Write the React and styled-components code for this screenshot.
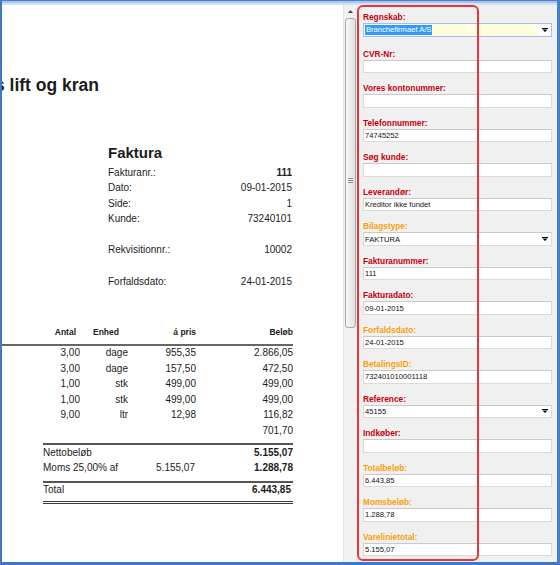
import React from 'react';
import styled, { createGlobalStyle } from 'styled-components';

const GlobalStyle = createGlobalStyle`
  html, body {
    margin: 0;
    padding: 0;
    background: #fff;
  }
  * {
    box-sizing: border-box;
  }
`;

const Window = styled.div`
  width: 560px;
  height: 565px;
  display: flex;
  flex-direction: column;
  border-left: 2px solid #3f78c5;
  border-right: 3px solid #4a7fc9;
  border-bottom: 3px solid #3f78c5;
  overflow: hidden;
`;

const TopStrip = styled.div`
  flex: none;
  height: 5px;
  background: linear-gradient(
    to bottom,
    #4f80c6 0,
    #4f80c6 1px,
    #a9c6ea 1px,
    #a9c6ea 3px,
    #d2e2f6 3px
  );
`;

const Body = styled.div`
  flex: 1;
  min-height: 0;
  display: flex;
`;

/* left: the scanned invoice */

const DocView = styled.div`
  flex: none;
  width: 341px;
  background: #fff;
  overflow: hidden;
  padding-top: 70px;
  font-family: 'Liberation Sans', Arial, sans-serif;
  color: #1c1c1c;
`;

const CompanyName = styled.div`
  display: flex;
  justify-content: flex-end;
  width: 97px;
  white-space: nowrap;
  font-size: 17.5px;
  font-weight: bold;
  line-height: 20px;
`;

const InvoiceHead = styled.div`
  margin: 49px 0 0 106px;
  width: 184px;
`;

const Title = styled.div`
  font-size: 15px;
  font-weight: bold;
  line-height: 18px;
`;

const InfoList = styled.div`
  margin-top: 2.5px;
  display: grid;
  grid-template-columns: 1fr auto;
  font-size: 10px;
  line-height: 15.6px;
`;

const InfoValue = styled.div`
  text-align: right;
  font-weight: ${p => (p.$bold ? 'bold' : 'normal')};
`;

const BlankRow = styled.div`
  grid-column: 1 / span 2;
  height: 15.6px;
`;

const Table = styled.div`
  margin-top: 36.7px;
  width: 291px;
`;

const HeadRow = styled.div`
  display: grid;
  grid-template-columns: 78px 48px 68px 97px;
  font-size: 8.5px;
  font-weight: bold;
  line-height: 12px;
  padding-bottom: 6px;
  border-bottom: 2px solid #666;
`;

const HeadCell = styled.div`
  text-align: ${p => p.$align || 'right'};
  padding-left: ${p => p.$padLeft || 0}px;
  padding-right: ${p => p.$padRight || 0}px;
`;

const LineRows = styled.div`
  margin-top: -1px;
`;

const LineRow = styled.div`
  display: grid;
  grid-template-columns: 78px 48px 68px 97px;
  font-size: 10px;
  line-height: 15.6px;
  text-align: right;
`;

const Summary = styled.div`
  margin: 4.5px 0 0 41px;
  width: 250px;
  border-top: 2px solid #555;
  padding: 1px 0 6px;
`;

const SumRow = styled.div`
  display: grid;
  grid-template-columns: 100px 52px 1fr;
  font-size: 10px;
  line-height: 14.5px;
`;

const SumCell = styled.div`
  text-align: ${p => (p.$right ? 'right' : 'left')};
  font-weight: ${p => (p.$bold ? 'bold' : 'normal')};
  white-space: nowrap;
`;

const TotalBlock = styled.div`
  margin-left: 41px;
  width: 250px;
  border-top: 2px solid #555;
  border-bottom: 3px double #3c3c3c;
  padding-bottom: 4px;
`;

const TotalRow = styled(SumRow)`
  line-height: 14px;
  padding-right: 2px;
`;

/* middle: vertical scrollbar */

const ScrollBar = styled.div`
  flex: none;
  width: 13px;
  background: #f1f1f1;
  border-left: 1px solid #e4e4e4;
  display: flex;
  flex-direction: column;
  align-items: center;
`;

const ScrollArrow = styled.div`
  height: 13px;
  display: flex;
  align-items: center;
  justify-content: center;
`;

const Thumb = styled.div`
  width: 11px;
  height: 310px;
  border: 1px solid #a8a8a8;
  border-radius: 3px;
  background: linear-gradient(to right, #f8f8f8, #e0e0e0);
  display: flex;
  align-items: center;
  justify-content: center;
  padding-top: 14px;
`;

const Grip = styled.div`
  width: 5px;
  height: 5px;
  background: repeating-linear-gradient(
    to bottom,
    #8a8a8a 0,
    #8a8a8a 1px,
    transparent 1px,
    transparent 2px
  );
`;

/* right: the booking form */

const Panel = styled.div`
  flex: 1;
  position: relative;
  background: #f0f0f0;
  padding: 6.5px 5px 0 7px;
  display: flex;
  flex-direction: column;
  gap: 10px;
  font-family: 'Liberation Sans', Arial, sans-serif;
`;

const Annotation = styled.div`
  position: absolute;
  top: 0;
  left: 1px;
  width: 122px;
  bottom: 1px;
  border: 2px solid #e8343a;
  border-radius: 6px;
  pointer-events: none;
`;

const Group = styled.div`
  display: flex;
  flex-direction: column;
`;

const FirstGroup = styled(Group)`
  margin-bottom: 1.5px;
`;

const Label = styled.div`
  font-size: 8.3px;
  font-weight: bold;
  line-height: 10px;
  margin-bottom: 1.2px;
  color: ${p => (p.$tone === 'orange' ? '#f6a10c' : '#c4000f')};
  white-space: nowrap;
`;

const Field = styled.div`
  height: 13.3px;
  background: #fff;
  border: 1px solid #dadada;
  border-top-color: #c9c9c9;
  padding: 0 3px 0 1px;
  display: flex;
  align-items: center;
  justify-content: space-between;
  font-size: 7.6px;
  color: #111;
  white-space: nowrap;
`;

const Combo = styled.div`
  height: 14.6px;
  background: #fff;
  border: 1px solid #a5bfe3;
  display: flex;
  font-size: 7.6px;
`;

const ComboText = styled.div`
  flex: 1;
  background: #fdfde0;
  display: flex;
  align-items: center;
  padding-left: 1px;
`;

const Selected = styled.span`
  background: #3399ff;
  color: #fff;
  padding: 0 1px;
  line-height: 10px;
`;

const ComboButton = styled.div`
  flex: none;
  width: 13px;
  display: flex;
  align-items: center;
  justify-content: center;
`;

function DropArrow() {
  return (
    <svg width="6" height="4" viewBox="0 0 6 4">
      <path d="M0 0h6v1H0z M0.5 1.5h5L3 4z" fill="#000" />
    </svg>
  );
}

function UpArrow() {
  return (
    <svg width="5" height="3" viewBox="0 0 5 3">
      <path d="M0 3h5L2.5 0z" fill="#444" />
    </svg>
  );
}

const info = [
  ['Fakturanr.:', '111', true],
  ['Dato:', '09-01-2015'],
  ['Side:', '1'],
  ['Kunde:', '73240101'],
  null,
  ['Rekvisitionnr.:', '10002'],
  null,
  ['Forfaldsdato:', '24-01-2015'],
];

const lines = [
  ['3,00', 'dage', '955,35', '2.866,05'],
  ['3,00', 'dage', '157,50', '472,50'],
  ['1,00', 'stk', '499,00', '499,00'],
  ['1,00', 'stk', '499,00', '499,00'],
  ['9,00', 'ltr', '12,98', '116,82'],
  ['', '', '', '701,70'],
];

const fields = [
  { label: 'CVR-Nr', value: '' },
  { label: 'Vores kontonummer', value: '' },
  { label: 'Telefonnummer', value: '74745252' },
  { label: 'Søg kunde', value: '' },
  { label: 'Leverandør', value: 'Kreditor ikke fundet' },
  { label: 'Bilagstype', value: 'FAKTURA', tone: 'orange', select: true },
  { label: 'Fakturanummer', value: '111' },
  { label: 'Fakturadato', value: '09-01-2015' },
  { label: 'Forfaldsdato', value: '24-01-2015', tone: 'orange' },
  { label: 'BetalingsID', value: '732401010001118', tone: 'orange' },
  { label: 'Reference', value: '45155', select: true },
  { label: 'Indkøber', value: '' },
  { label: 'Totalbeløb', value: '6.443,85', tone: 'orange' },
  { label: 'Momsbeløb', value: '1.288,78', tone: 'orange' },
  { label: 'Varelinietotal', value: '5.155,07', tone: 'orange' },
];

function Invoice() {
  return (
    <DocView>
      <CompanyName>Andersens lift og kran</CompanyName>
      <InvoiceHead>
        <Title>Faktura</Title>
        <InfoList>
          {info.map((row, i) =>
            row ? (
              <React.Fragment key={i}>
                <div>{row[0]}</div>
                <InfoValue $bold={row[2]}>{row[1]}</InfoValue>
              </React.Fragment>
            ) : (
              <BlankRow key={i} />
            )
          )}
        </InfoList>
      </InvoiceHead>

      <Table>
        <HeadRow>
          <HeadCell $padRight={4}>Antal</HeadCell>
          <HeadCell $align="left" $padLeft={13}>Enhed</HeadCell>
          <HeadCell>á pris</HeadCell>
          <HeadCell>Beløb</HeadCell>
        </HeadRow>
        <LineRows>
          {lines.map((l, i) => (
            <LineRow key={i}>
              {l.map((c, j) => (
                <div key={j}>{c}</div>
              ))}
            </LineRow>
          ))}
        </LineRows>
      </Table>

      <Summary>
        <SumRow>
          <SumCell>Nettobeløb</SumCell>
          <SumCell />
          <SumCell $right $bold>5.155,07</SumCell>
        </SumRow>
        <SumRow>
          <SumCell>Moms 25,00% af</SumCell>
          <SumCell $right>5.155,07</SumCell>
          <SumCell $right $bold>1.288,78</SumCell>
        </SumRow>
      </Summary>
      <TotalBlock>
        <TotalRow>
          <SumCell>Total</SumCell>
          <SumCell />
          <SumCell $right $bold>6.443,85</SumCell>
        </TotalRow>
      </TotalBlock>
    </DocView>
  );
}

function BookingForm() {
  return (
    <Panel>
      <FirstGroup>
        <Label>Regnskab:</Label>
        <Combo>
          <ComboText>
            <Selected>Branchefirmaet A/S</Selected>
          </ComboText>
          <ComboButton>
            <DropArrow />
          </ComboButton>
        </Combo>
      </FirstGroup>
      {fields.map(f => (
        <Group key={f.label}>
          <Label $tone={f.tone}>{f.label}:</Label>
          <Field>
            <span>{f.value}</span>
            {f.select && <DropArrow />}
          </Field>
        </Group>
      ))}
      <Annotation />
    </Panel>
  );
}

export default function App() {
  return (
    <>
      <GlobalStyle />
      <Window>
        <TopStrip />
        <Body>
          <Invoice />
          <ScrollBar>
            <ScrollArrow>
              <UpArrow />
            </ScrollArrow>
            <Thumb>
              <Grip />
            </Thumb>
          </ScrollBar>
          <BookingForm />
        </Body>
      </Window>
    </>
  );
}
